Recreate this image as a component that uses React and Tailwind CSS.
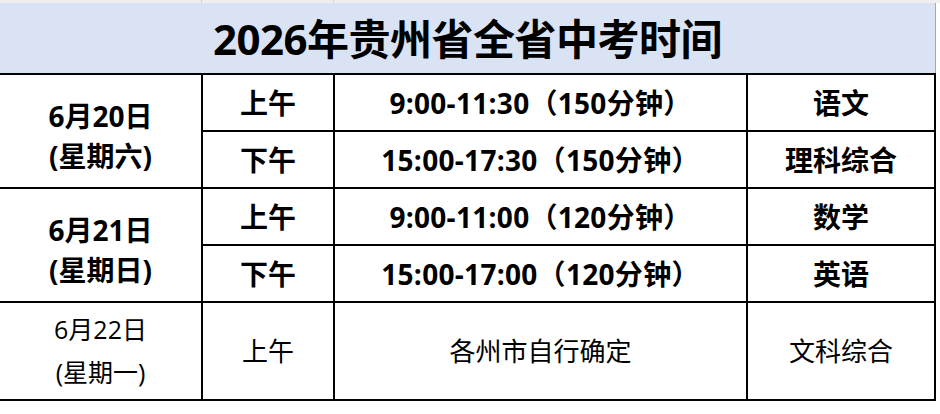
import { Fragment } from 'react'

const rows = [
  {
    date: '6月20日',
    week: '(星期六)',
    items: [
      { part: '上午', time: '9:00-11:30（150分钟）', subject: '语文' },
      { part: '下午', time: '15:00-17:30（150分钟）', subject: '理科综合' },
    ],
  },
  {
    date: '6月21日',
    week: '(星期日)',
    items: [
      { part: '上午', time: '9:00-11:00（120分钟）', subject: '数学' },
      { part: '下午', time: '15:00-17:00（120分钟）', subject: '英语' },
    ],
  },
]

const font = { fontFamily: '"Open Sans", "Noto Sans CJK SC", sans-serif' }

function Cell({ children, className = '' }) {
  return (
    <div className={`flex items-center justify-center bg-white text-black ${className}`}>
      {children}
    </div>
  )
}

export default function App() {
  return (
    <div className="w-[940px] h-[414px] bg-white overflow-hidden" style={font}>
      {/* spreadsheet residue strip */}
      <div className="flex h-[3px] bg-[#efefef]">
        <div className="w-[202px] border-r border-[#d4d4d4]" />
        <div className="w-[132px] border-r border-[#d4d4d4]" />
      </div>

      {/* title */}
      <div className="w-[936px] h-[70px] bg-[#dae3f3] border-r border-[#a8a8a8] flex items-center justify-center">
        <h1 className="text-[42px] font-bold leading-none text-black tracking-[-0.5px] pt-[1px]">
          2026年贵州省全省中考时间
        </h1>
      </div>

      <div className="grid w-[936px] grid-cols-[201px_130px_411px_186px] grid-rows-[55px_55px_55px_55px_96px] gap-[2px] bg-black pt-[2px] pr-[2px] pb-[2px]">
        {rows.map((r) => (
          <Fragment key={r.date}>
            <Cell className="row-span-2 flex-col font-bold text-[28px] leading-[40px] pt-[10px]">
              <span>{r.date}</span>
              <span>{r.week}</span>
            </Cell>
            {r.items.map((it) => (
              <Fragment key={it.time}>
                <Cell className="font-bold text-[28px]">{it.part}</Cell>
                <Cell className="font-bold text-[28px] tracking-[0.3px]">{it.time}</Cell>
                <Cell className="font-bold text-[28px]">{it.subject}</Cell>
              </Fragment>
            ))}
          </Fragment>
        ))}
        <Cell className="flex-col text-[25px] leading-[43px] text-[#111]">
          <span>6月22日</span>
          <span>(星期一)</span>
        </Cell>
        <Cell className="text-[26px] text-[#111]">上午</Cell>
        <Cell className="text-[26px] text-[#111]">各州市自行确定</Cell>
        <Cell className="text-[26px] text-[#111]">文科综合</Cell>
      </div>
    </div>
  )
}
